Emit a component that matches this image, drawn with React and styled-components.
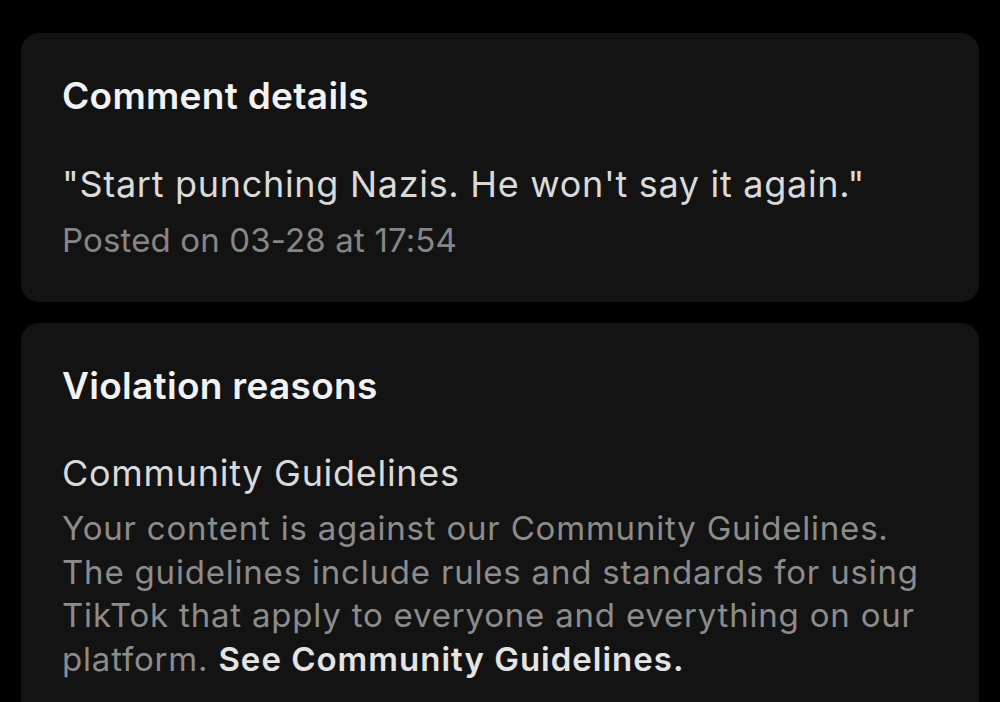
import React from "react";
import styled, { createGlobalStyle } from "styled-components";

const Global = createGlobalStyle`
  html, body { margin: 0; padding: 0; background: #000; }
  body { font-family: Inter, "Noto Sans", sans-serif; -webkit-font-smoothing: antialiased; }
`;

const Page = styled.div`
  display: flex;
  flex-direction: column;
  gap: 21px;
  padding: 33px 21px 0 21px;
  height: 702px;
  box-sizing: border-box;
  overflow: hidden;
`;

const Card = styled.section`
  background: #131313;
  border-radius: 18px;
  padding: ${(p) => p.$pad || "41px 41px 41px"};
  flex-shrink: 0;
`;

const Title = styled.h2`
  margin: 0;
  font-size: 37px;
  font-weight: 600;
  line-height: 44px;
  color: #f2f2f2;
  letter-spacing: 0.3px;
`;

const Quote = styled.p`
  margin: 0;
  margin-top: ${(p) => p.$mt || "0"};
  font-size: 36px;
  line-height: 44px;
  color: #dadada;
  font-weight: 400;
  letter-spacing: 0.7px;
`;

const Meta = styled.p`
  margin: 14px 0 0;
  font-size: 33px;
  line-height: 40px;
  color: #868686;
  letter-spacing: 0.15px;
`;

const Body = styled.p`
  margin: 12px 0 0;
  font-size: 33px;
  line-height: 43.5px;
  color: #8c8c8c;
  letter-spacing: 0.8px;
`;

const Link = styled.strong`
  font-weight: 600;
  color: #e4e4e4;
  letter-spacing: 1px;
`;

export default function App() {
  return (
    <>
      <Global />
      <Page>
        <Card $pad="41px 41px 42px">
          <Title>Comment details</Title>
          <Quote $mt="44px">"Start punching Nazis. He won't say it again."</Quote>
          <Meta>Posted on 03-28 at 17:54</Meta>
        </Card>
        <Card $pad="41px 41px 40px">
          <Title>Violation reasons</Title>
          <Quote $mt="43px">Community Guidelines</Quote>
          <Body>
            Your content is against our Community Guidelines. The guidelines include rules and
            standards for using TikTok that apply to everyone and everything on our platform.{" "}
            <Link>See Community Guidelines.</Link>
          </Body>
        </Card>
      </Page>
    </>
  );
}
